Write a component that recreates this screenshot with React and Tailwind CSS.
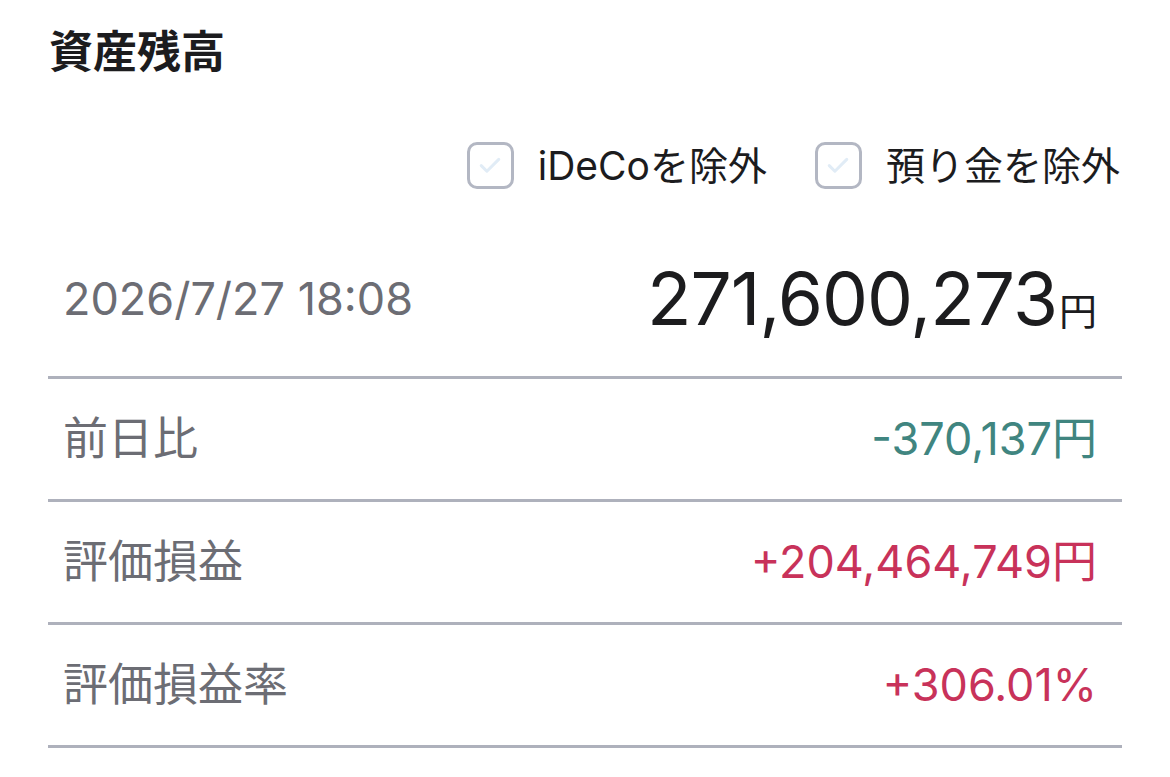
import React from "react";

const font = { fontFamily: 'Inter, "Noto Sans CJK JP", sans-serif' };

function Check({ label }) {
  return (
    <div className="flex items-center gap-[24px]">
      <div className="w-[47px] h-[47px] rounded-[10px] border-[3px] border-[#b3b7c3] bg-white flex items-center justify-center">
        <svg width="30" height="30" viewBox="0 0 24 24" fill="none">
          <path d="M5 12.5l4.5 4.5L19 7.5" stroke="#e1ecf6" strokeWidth="2.4" strokeLinecap="round" strokeLinejoin="round" />
        </svg>
      </div>
      <span className="text-[39px] leading-none text-[#1c1c1e]">{label}</span>
    </div>
  );
}

function Row({ label, value, color }) {
  return (
    <div className="h-[123px] flex items-center justify-between border-b-[3px] border-[#aeb1bc] pl-[15px] pr-[25px] pb-[1px]">
      <span className="text-[45px] leading-none text-[#6c6d74]">{label}</span>
      <span className={"text-[45px] leading-none " + color}>{value}</span>
    </div>
  );
}

export default function App() {
  return (
    <div className="w-[1170px] h-[777px] bg-white overflow-hidden" style={font}>
      <div className="px-[48px]">
        <div className="h-[104px] flex items-center pl-[1px]">
          <h1 className="text-[44px] leading-none font-bold text-[#1c1c1e]">資産残高</h1>
        </div>
        <div className="h-[122px] flex items-center justify-end gap-[48px] pr-[2px]">
          <Check label="iDeCoを除外" />
          <Check label="預り金を除外" />
        </div>
        <div className="h-[153px] flex items-center justify-between border-b-[3px] border-[#aeb1bc] pl-[15px] pr-[25px] pb-[6px]">
          <span className="text-[45px] leading-none text-[#6c6d74]">2026/7/27 18:08</span>
          <span className="flex items-baseline text-[#1c1c1e]">
            <span className="text-[73px] leading-none tracking-[-1px]">271,600,273</span>
            <span className="text-[38px] leading-none ml-[2px]">円</span>
          </span>
        </div>
        <Row label="前日比" value="-370,137円" color="text-[#408580]" />
        <Row label="評価損益" value="+204,464,749円" color="text-[#c8325a]" />
        <Row label="評価損益率" value="+306.01%" color="text-[#c8325a]" />
      </div>
    </div>
  );
}
